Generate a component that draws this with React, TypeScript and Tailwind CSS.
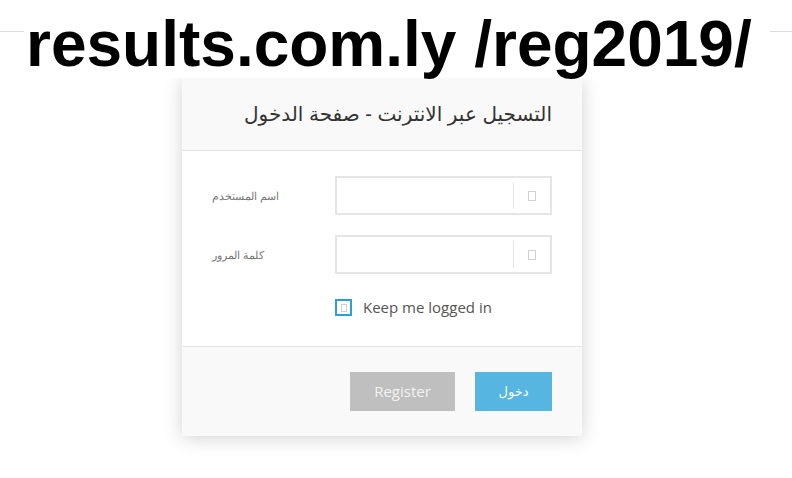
import React from "react";

// missing-glyph box, as the icon font failed to load in the original
function Tofu({ className = "" }: { className?: string }) {
  return <span className={`inline-block border border-[#cfcfd6] ${className}`} />;
}

function Field({ label }: { label: string }) {
  return (
    <div className="flex items-center">
      <label
        dir="rtl"
        className="w-[123px] pt-[2px] text-left text-[10.5px] text-[#777] font-['Liberation_Sans',Arial,sans-serif]"
      >
        {label}
      </label>
      <div className="flex h-[39px] w-[217px] items-center border-2 border-[#e5e5e5] bg-white">
        <input className="h-full w-full min-w-0 flex-1 bg-transparent px-3 outline-none" />
        <div className="h-[27px] w-px shrink-0 bg-[#e5e5e5]" />
        <div className="flex w-[36px] shrink-0 items-center justify-center">
          <Tofu className="h-[10px] w-[8px]" />
        </div>
      </div>
    </div>
  );
}

export default function App() {
  return (
    <div className="relative h-[478px] w-full overflow-hidden bg-white font-['Open_Sans',sans-serif]">
      <div className="h-[31px]" />
      <div className="border-t border-[#dddddd]" />

      <div className="ml-[182px] mt-[46px] w-[400px] bg-white shadow-[0_2px_18px_rgba(0,0,0,0.18)]">
        <div className="flex h-[73px] items-center justify-end border-b border-[#e3e3e3] bg-[#f9f9f9] pr-[30px]">
          <h2
            dir="rtl"
            className="text-[20px] text-[#333] font-['Liberation_Sans','DejaVu_Sans',sans-serif]"
          >
            التسجيل عبر الانترنت - صفحة الدخول
          </h2>
        </div>

        <div className="flex flex-col gap-[20px] px-[30px] pb-[30px] pt-[25px]">
          <Field label="اسم المستخدم" />
          <Field label="كلمة المرور" />
          <div className="ml-[123px] mt-[5px] flex h-[17px] items-center gap-[11px]">
            <span className="flex h-[17px] w-[17px] items-center justify-center border-2 border-[#2a9fd8]">
              <Tofu className="h-[8px] w-[6px]" />
            </span>
            <span className="text-[15px] leading-[17px] text-[#555]">Keep me logged in</span>
          </div>
        </div>

        <div className="flex justify-end gap-[20px] border-t border-[#e3e3e3] bg-[#f9f9f9] px-[30px] py-[25px]">
          <button className="h-[39px] w-[105px] bg-[#bfbfbf] text-[15px] text-[#f2f2f2]">
            Register
          </button>
          <button
            dir="rtl"
            className="h-[39px] w-[77px] bg-[#56b6e1] text-[13px] text-white font-['DejaVu_Sans',sans-serif]"
          >
            دخول
          </button>
        </div>
      </div>

      {/* watermark banner laid over the page top */}
      <div className="absolute left-[24px] top-0 h-[78px] w-[746px] bg-white pl-[2px] pt-[7px]">
        <div className="whitespace-nowrap text-[64px] font-bold leading-[normal] text-black font-['Liberation_Sans',Arial,sans-serif]">
          results.com.ly /reg2019/
        </div>
      </div>
    </div>
  );
}
